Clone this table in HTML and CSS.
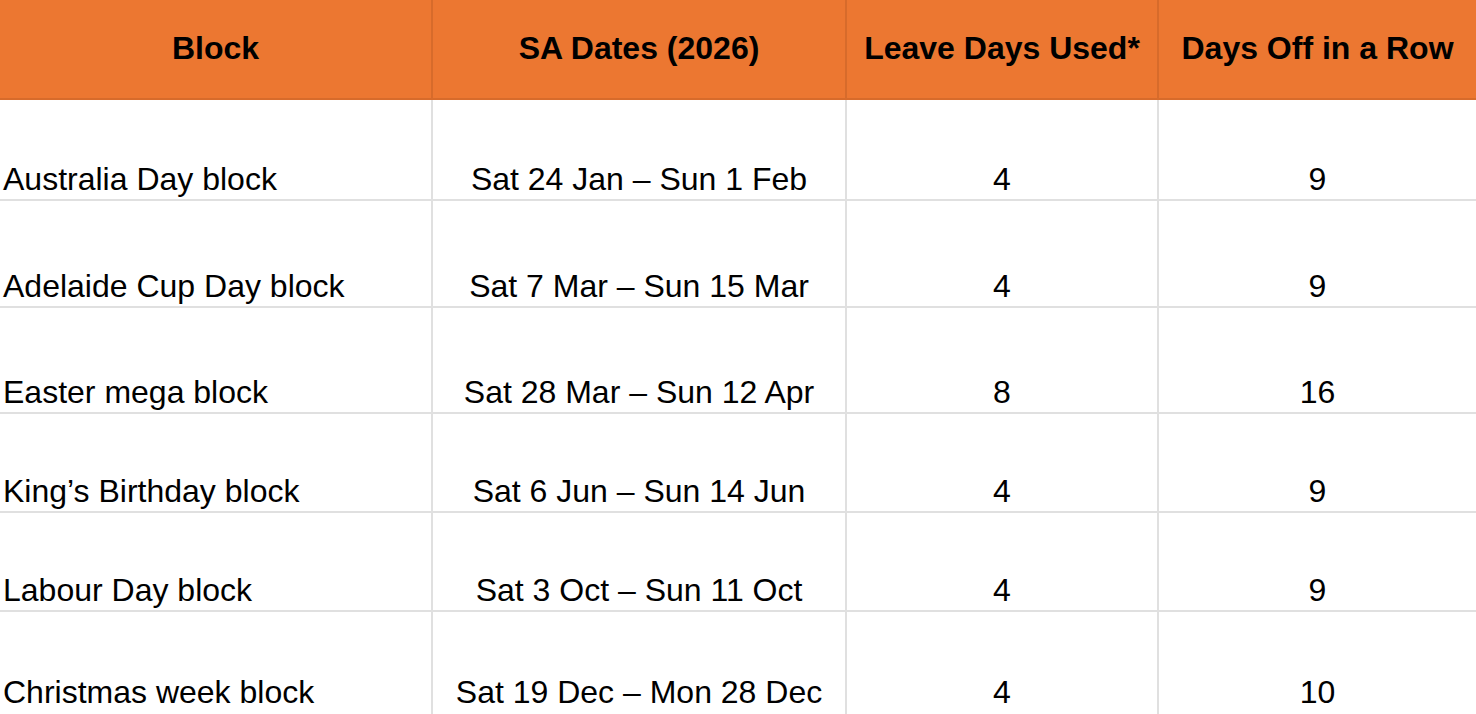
FILE: index.html
```html
<!DOCTYPE html>
<html lang="en">
<head>
<meta charset="utf-8">
<title>SA Long Weekend Blocks 2026</title>
<link rel="stylesheet" href="styles.css">
</head>
<body>
<div class="sheet">
  <div class="cell head">Block</div>
  <div class="cell head">SA Dates (2026)</div>
  <div class="cell head">Leave Days Used*</div>
  <div class="cell head last">Days Off in a Row</div>

  <div class="cell name">Australia Day block</div>
  <div class="cell">Sat 24 Jan – Sun 1 Feb</div>
  <div class="cell">4</div>
  <div class="cell last">9</div>

  <div class="cell name">Adelaide Cup Day block</div>
  <div class="cell">Sat 7 Mar – Sun 15 Mar</div>
  <div class="cell">4</div>
  <div class="cell last">9</div>

  <div class="cell name">Easter mega block</div>
  <div class="cell">Sat 28 Mar – Sun 12 Apr</div>
  <div class="cell">8</div>
  <div class="cell last">16</div>

  <div class="cell name">King’s Birthday block</div>
  <div class="cell">Sat 6 Jun – Sun 14 Jun</div>
  <div class="cell">4</div>
  <div class="cell last">9</div>

  <div class="cell name">Labour Day block</div>
  <div class="cell">Sat 3 Oct – Sun 11 Oct</div>
  <div class="cell">4</div>
  <div class="cell last">9</div>

  <div class="cell name end">Christmas week block</div>
  <div class="cell end">Sat 19 Dec – Mon 28 Dec</div>
  <div class="cell end">4</div>
  <div class="cell last end">10</div>
</div>
</body>
</html>
```

FILE: styles.css
```css
html, body {
  margin: 0;
  padding: 0;
  background: #ffffff;
  overflow: hidden;
}

.sheet {
  display: grid;
  grid-template-columns: 433px 414px 312px 1fr;
  grid-template-rows: 100px 101px 107px 106px 99px 99px 102px;
  width: 1476px;
  font-family: "Liberation Sans", Arial, sans-serif;
  font-size: 32px;
  color: #000000;
}

.cell {
  box-sizing: border-box;
  display: flex;
  align-items: flex-end;
  justify-content: center;
  padding: 0 0 1px 0;
  border-right: 2px solid #e0e0e0;
  border-bottom: 2px solid #e0e0e0;
  white-space: nowrap;
  overflow: hidden;
}

.cell.last {
  border-right: none;
}

.cell.name {
  justify-content: flex-start;
  padding-left: 3px;
}

.cell.end {
  border-bottom: none;
  padding-bottom: 3px;
}

.cell.head {
  background: #ec7731;
  font-weight: bold;
  align-items: center;
  padding: 0 0 2px 0;
  border-right-color: #d76b2b;
  border-bottom-color: #d76b2b;
}

.cell.head.last {
  border-right: none;
}
```
